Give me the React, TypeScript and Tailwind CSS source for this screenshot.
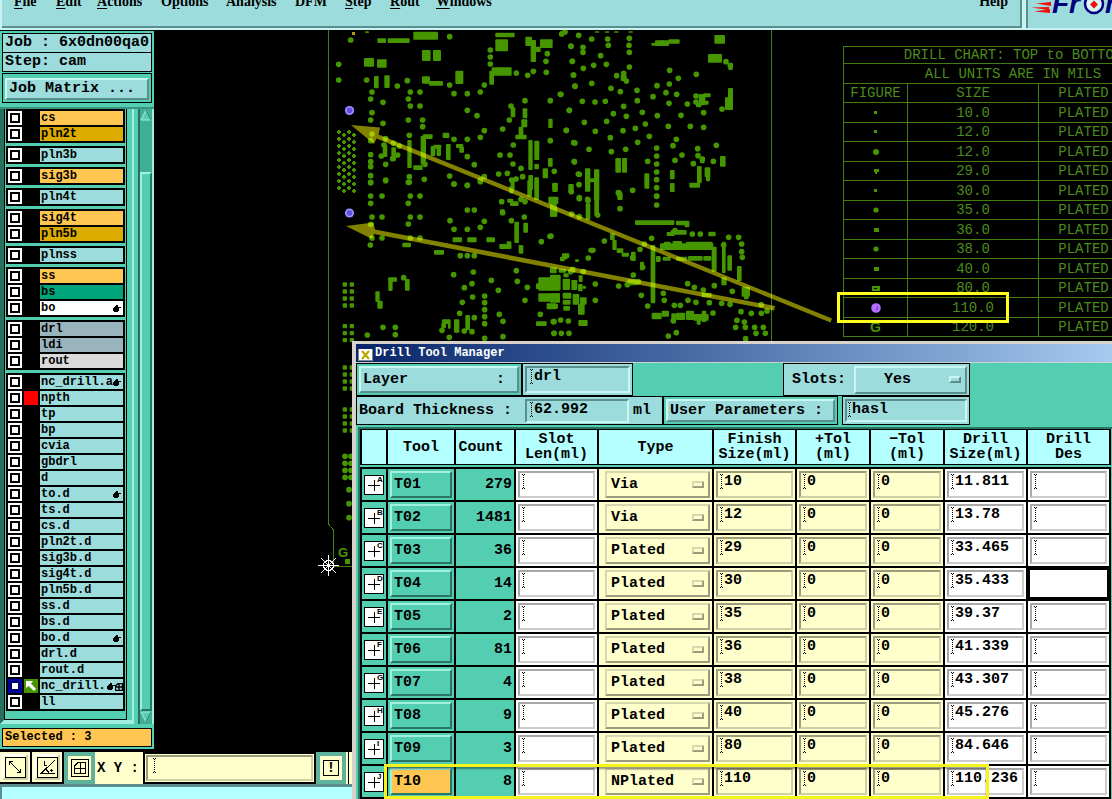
import { useState } from "react";

interface Layer {
    name: string;
    color?: string;
    mark?: "hand" | "grid";
    swatch?: "red" | "arrow";
    active?: boolean;
}

interface Tool {
    id: string;
    letter: string;
    count: number;
    type: string;
    finish: string;
    drill: string;
}

const MONO = "font-['Liberation_Mono',monospace] font-bold";
const RAISED = "border-2 border-t-[#c9f7f4] border-l-[#c9f7f4] border-b-[#5b8f8f] border-r-[#5b8f8f]";
const SUNKEN = "border-2 border-t-[#5b8f8f] border-l-[#5b8f8f] border-b-[#c9f7f4] border-r-[#c9f7f4]";
const TEAL_RAISED = "border-2 border-t-[#9ff0dc] border-l-[#9ff0dc] border-b-[#2a7563] border-r-[#2a7563]";

const ORANGE = "bg-[#ffc651]";
const GOLD = "bg-[#dbab00]";
const STEEL = "bg-[#9ab4be]";

const layerGroups: Layer[][] = [
    [{ name: "cs", color: ORANGE }, { name: "pln2t", color: GOLD }],
    [{ name: "pln3b" }],
    [{ name: "sig3b", color: ORANGE }],
    [{ name: "pln4t" }],
    [{ name: "sig4t", color: ORANGE }, { name: "pln5b", color: GOLD }],
    [{ name: "plnss" }],
    [{ name: "ss", color: ORANGE }, { name: "bs", color: "bg-[#00a57c]" }, { name: "bo", color: "bg-white", mark: "hand" }],
    [{ name: "drl", color: STEEL }, { name: "ldi", color: STEEL }, { name: "rout", color: "bg-[#dadada]" }],
    [
        { name: "nc_drill.a", mark: "hand" },
        { name: "npth", swatch: "red" },
        { name: "tp" },
        { name: "bp" },
        { name: "cvia" },
        { name: "gbdrl" },
        { name: "d" },
        { name: "to.d", mark: "hand" },
        { name: "ts.d" },
        { name: "cs.d" },
        { name: "pln2t.d" },
        { name: "sig3b.d" },
        { name: "sig4t.d" },
        { name: "pln5b.d" },
        { name: "ss.d" },
        { name: "bs.d" },
        { name: "bo.d", mark: "hand" },
        { name: "drl.d" },
        { name: "rout.d" },
        { name: "nc_drill.", mark: "grid", swatch: "arrow", active: true },
        { name: "ll" },
    ],
];

const tools: Tool[] = [
    { id: "T01", letter: "A", count: 279, type: "Via", finish: "10", drill: "11.811" },
    { id: "T02", letter: "B", count: 1481, type: "Via", finish: "12", drill: "13.78" },
    { id: "T03", letter: "C", count: 36, type: "Plated", finish: "29", drill: "33.465" },
    { id: "T04", letter: "D", count: 14, type: "Plated", finish: "30", drill: "35.433" },
    { id: "T05", letter: "E", count: 2, type: "Plated", finish: "35", drill: "39.37" },
    { id: "T06", letter: "F", count: 81, type: "Plated", finish: "36", drill: "41.339" },
    { id: "T07", letter: "G", count: 4, type: "Plated", finish: "38", drill: "43.307" },
    { id: "T08", letter: "H", count: 9, type: "Plated", finish: "40", drill: "45.276" },
    { id: "T09", letter: "I", count: 3, type: "Plated", finish: "80", drill: "84.646" },
    { id: "T10", letter: "J", count: 8, type: "NPlated", finish: "110", drill: "110.236" },
];

const chartSizes = ["10.0", "12.0", "12.0", "29.0", "30.0", "35.0", "36.0", "38.0", "40.0", "80.0", "110.0", "120.0"];

const menus = [
    { pre: "", key: "F", rest: "ile", width: "w-[42px]" },
    { pre: "", key: "E", rest: "dit", width: "w-[41px]" },
    { pre: "", key: "A", rest: "ctions", width: "w-16" },
    { pre: "O", key: "p", rest: "tions", width: "w-[65px]" },
    { pre: "Analysis", key: "", rest: "", width: "w-[69px]" },
    { pre: "DFM", key: "", rest: "", width: "w-[50px]" },
    { pre: "", key: "S", rest: "tep", width: "w-[45px]" },
    { pre: "", key: "R", rest: "out", width: "w-[46px]" },
    { pre: "", key: "W", rest: "indows", width: "w-16" },
];

// Drill hits per board quadrant, in thirds of a pixel: "x,y" for round holes and "x,y,w,h" for merged slots
const quadrants = [
    {
        x: 320,
        y: 30,
        holes: "92,30 56,103 56,150 140,150 232,168 262,152 156,186 152,207 189,217 271,186 300,186 265,207 271,228 300,228 265,270 308,270 308,290 156,248 152,270 189,280 389,20 389,165 402,191 442,191 481,186 493,165 442,241 471,257 442,380 402,328 442,328 481,322 493,302 402,462 442,466 389,438 463,404 511,60 511,81 511,102 589,129 623,136 640,124 679,127 682,71 678,94 757,94 753,49 761,135 765,168 721,193 691,212 748,241 739,301 763,395 765,339 703,424 691,332 540,375 562,430 536,432 579,402 603,415 548,297 568,270 615,212 152,374 152,395 152,410 152,437 152,458 197,403 197,450 268,316 268,457 156,312 152,332 197,326 220,340 238,348 313,448 315,403 481,450 493,440 588,447 608,440 725,12 735,6 268,440 184,378 218,386 192,345 233,375 573,228 580,345 570,375 575,450 775,432",
        slots: "280,5,74,24 172,25,26,14 203,25,66,14 306,60,26,33 339,60,24,33 132,84,30,26 171,88,29,25 162,138,14,37 193,136,16,38 306,139,24,22 327,153,42,14 406,122,24,40 508,122,14,42 515,112,60,25 526,8,58,14 526,28,38,36 616,20,20,28 632,30,16,66 660,28,38,26 640,50,22,16 685,266,13,28 625,330,13,90 643,332,15,58 608,235,14,30 604,268,18,24 572,232,14,30 596,290,14,30 586,314,34,14 188,345,14,36 214,352,14,40 262,330,13,84 302,318,16,86 332,348,14,30 340,344,24,12 350,350,13,28 378,342,14,48 408,342,22,12 418,350,14,18 625,435,14,45 643,402,14,16 643,442,14,38 668,415,16,30 684,384,14,26 280,406,28,14 308,313,30,14 368,308,20,16 697,460,16,20 135,4,12,5",
    },
    {
        x: 560,
        y: 30,
        holes: "56,16 33,48 69,52 69,67 95,27 143,27 145,46 208,25 207,46 208,67 208,111 122,77 101,106 139,103 37,94 70,115 40,135 45,169 95,160 153,175 181,185 191,130 199,153 170,137 231,181 232,212 67,214 105,216 136,214 191,229 160,251 199,259 247,247 28,241 73,277 140,274 19,301 106,304 189,302 226,295 256,282 151,323 268,319 41,338 87,358 154,365 197,358 233,337 43,395 263,394 291,167 279,200 318,188 350,193 328,162 329,121 355,145 327,220 382,222 292,257 363,256 325,289 349,328 339,347 345,391 366,375 409,133 431,248 391,289 431,292 413,356 469,346 400,401 460,394 486,237 290,354 290,378 290,402 290,426 290,449 290,473 290,498 218,481 58,433 57,464 58,503 83,508 3,193 498,95 511,107 414,377 427,387 305,39 408,198 408,216 427,205 175,488",
        slots: "285,31,42,17 325,28,34,13 274,39,14,8 463,15,32,26 444,72,42,26 505,98,13,22 504,174,15,66 495,202,12,38 416,192,20,34 430,190,22,12 430,212,16,12 408,220,16,12 0,4,22,8 182,135,18,18 166,384,17,44 186,384,15,44 253,430,15,46 330,420,14,28 330,459,14,27 411,408,14,52 388,458,32,15 434,412,17,30 438,436,12,18 420,380,14,20 480,378,17,32 25,462,16,26 75,415,16,70 90,445,24,12 102,418,16,92 172,488,16,22 104,4,14,4 134,4,14,4 162,4,14,4 205,4,14,4",
    },
    {
        x: 320,
        y: 180,
        holes: "152,48 152,70 186,48 271,48 300,48 265,70 156,111 186,111 152,133 271,111 300,111 265,132 156,174 186,174 271,174 300,174 151,195 390,122 402,148 442,90 463,90 442,148 481,142 493,124 421,227 442,227 463,227 402,12 442,16 481,5 545,65 548,98 574,122 613,111 589,272 592,304 622,322 615,361 664,185 690,169 401,284 460,276 456,311 433,323 514,301 535,331 458,351 427,367 494,348 494,368 494,389 494,410 494,431 419,400 463,413 538,403 549,424 549,470 494,475 456,455 433,453 388,472 189,442 226,442 226,464 142,465 700,425 702,460 661,403 152,7 265,7 197,2 251,293 366,451 603,58 615,65",
        slots: "398,172,28,15 442,172,28,15 499,172,26,15 247,188,26,14 342,210,30,14 583,125,14,64 610,128,14,30 538,192,36,15 560,184,14,22 596,195,14,26 205,295,13,38 205,292,26,13 255,297,14,35 166,334,13,32 172,362,16,24 366,418,26,14 364,430,14,14 384,430,8,16 402,418,16,40 436,405,14,45 648,424,32,14 562,56,18,12 570,64,26,14 540,88,14,16 572,0,12,30 568,18,12,22 622,0,14,50 643,0,14,60 697,8,16,28 685,50,30,22 690,70,20,40 655,292,65,40 648,310,14,18 655,340,65,25 680,370,30,18 68,307,13,13 89,307,13,13 68,328,13,13 89,328,13,13 68,349,13,13 89,349,13,13 68,370,13,13 89,370,13,13 68,432,13,13 89,432,13,13 68,453,13,13 89,453,13,13 68,474,13,13 89,474,13,13",
    },
    {
        x: 550,
        y: 190,
        holes: "320,19 320,45 208,10 210,56 88,26 88,80 114,32 163,153 270,178 126,181 115,204 45,200 136,282 136,331 12,395 32,390 55,393 12,430 34,430 57,430 206,288 250,255 274,316 293,348 413,281 433,292 493,287 547,304 460,300 438,337 414,331 478,338 373,346 391,346 489,369 355,438 379,428 340,310 343,331 427,132 451,132 536,142 566,142 575,162 575,185 577,202 521,165 604,370 634,370 651,363 634,344 561,391 583,396 557,412 586,412 614,412 640,412 618,430 646,430 587,446 515,340 540,343 573,365 64,5 143,75 375,122 305,145 283,162 65,72 248,203 278,232 3,138 265,275 232,284 320,378 370,392 62,245 100,245",
        slots: "255,91,118,14 378,92,40,14 404,100,14,12 350,126,24,12 362,120,48,14 475,125,22,14 330,160,160,20 342,155,20,10 368,153,28,10 408,155,80,10 485,170,15,75 318,198,14,18 338,200,24,12 378,200,34,12 414,198,44,14 460,198,24,14 302,165,14,175 516,155,11,95 532,196,14,46 561,228,14,45 575,290,25,30 582,310,14,18 514,262,16,24 180,130,14,20 187,150,13,30 200,175,20,14 215,188,22,12 243,185,14,28 270,215,12,26 232,268,30,18 305,368,30,20 335,362,22,18 364,370,14,30 378,368,28,22 408,362,24,28 430,372,46,20 440,386,12,18 455,362,14,34 455,308,30,14 0,232,20,18 26,236,22,12 60,230,16,18 92,238,16,10 0,254,32,46 40,250,16,12 38,266,22,34 64,270,18,30 86,256,12,20 84,282,14,22 98,288,10,8 0,310,30,28 38,308,26,18 68,312,20,32 38,330,24,14 90,322,20,22 84,342,20,32 0,342,24,14 40,348,20,14 85,390,28,18 107,40,14,50 133,0,14,78 200,0,12,20 0,22,18,22 0,50,22,30 36,190,22,14 30,200,14,14 75,208,12,8 115,175,22,12",
    },
    {
        x: 310,
        y: 340,
        holes: "105,349 123,349 105,370 123,370 105,391 123,391 105,412 123,412 117,449 117,491 117,533",
        slots: "98,76,13,13 119,76,13,13 98,97,13,13 119,97,13,13 98,118,13,13 119,118,13,13 98,139,13,13 119,139,13,13 98,202,13,13 119,202,13,13 98,223,13,13 119,223,13,13 98,244,13,13 119,244,13,13 98,265,13,13 119,265,13,13",
    },
];

const parse = (list: string) => list.split(" ").map((item) => item.split(",").map(Number));

function Board() {
    const hatch: number[][] = [];
    for (let row = 0; row < 9; row++) {
        for (let col = 0; col < 4; col++) {
            hatch.push([339 + col * 5, 132 + row * 7 + (col % 2 ? 3 : 0)]);
        }
    }

    return (
        <svg className="absolute top-0 left-[308px]" width="540" height="560" viewBox="308 30 540 560">
            <g fill="none" stroke="#447d12" shapeRendering="crispEdges">
                <path d="M328.5 30V524L333.5 530V566.5H360" />
                <path d="M771.5 30V345" />
            </g>
            <g fill="#469600">
                {quadrants.map((q, i) => (
                    <g key={i} transform={`translate(${q.x} ${q.y}) scale(0.3333)`}>
                        {parse(q.holes).map(([x, y], n) => (
                            <circle key={n} cx={x} cy={y} r="8.5" />
                        ))}
                        {parse(q.slots).map(([x, y, w, h], n) => (
                            <rect key={n} x={x} y={y} width={w} height={h} rx="3" />
                        ))}
                    </g>
                ))}
                <rect x="345" y="559" width="5" height="5" />
                <text x="338" y="557" fontSize="13" fontWeight="bold" fontFamily="Liberation Sans, sans-serif">G</text>
            </g>
            <path
                d={hatch.map(([x, y]) => `M${x - 2} ${y}h4M${x} ${y - 2}v4`).join("")}
                stroke="#469600"
                strokeWidth="2"
            />
            <rect x="352" y="32" width="3" height="3" fill="#a89a20" />
            {[110.5, 213].map((cy) => (
                <g key={cy}>
                    <circle cx="349.5" cy={cy} r="4.6" fill="#9c8cff" />
                    <circle cx="349.5" cy={cy} r="2.8" fill="#4a54e8" />
                    <path d={`M347.5 ${cy}h2m1 -1v2`} stroke="#c03bb4" />
                </g>
            ))}
            {/* Callout arrows from the chart row to the two tooling holes */}
            <g fill="#ffff00" fillOpacity="0.51">
                <path d="M351 125L380 127.500L378.500 134.500L832 318.500L830.500 322.500L376.500 138.500L374 144Z" />
                <path d="M346 226L373.500 222.500L375 229.500L775 306L774 310.500L374 234L372 239Z" />
            </g>
            <g stroke="#fff" shapeRendering="crispEdges">
                <path d="M318 565.500H339M328.500 555V576M321 558L336 573M336 558L321 573" />
                <circle cx="328.500" cy="565.500" r="5" fill="none" />
            </g>
        </svg>
    );
}

function Figure({ index }: { index: number }) {
    if (index === 11) {
        return <span className="font-['Liberation_Sans',sans-serif] font-bold text-[#469600]">G</span>;
    }
    return (
        <svg className="mx-auto" width="12" height="12" viewBox="0 0 12 12" fill="#469600">
            {index === 10 && (
                <>
                    <circle cx="6" cy="6" r="4.800" fill="#b56cff" />
                    <path d="M7 5h1M6 7h2" stroke="#4b2a86" />
                </>
            )}
            {index === 9 && <path d="M2 4h8v5H2zM4 6v1h3V6z" fillRule="evenodd" />}
            {index === 2 && <circle cx="6" cy="6" r="3" />}
            {index === 3 && <path d="M4 4h5v3H7v2H5V7H4z" />}
            {(index === 5 || index === 7) && <circle cx="6" cy="6" r="2.600" />}
            {(index === 6 || index === 8) && <rect x="4" y="4" width="5" height="4" />}
            {(index < 2 || index === 4) && <rect x="4" y="4" width="3" height="3" />}
        </svg>
    );
}

function DrillChart() {
    const cell = "border border-[#447d12] p-0";

    return (
        <div className="absolute top-4 left-[843px]">
            <table className="table-fixed border-collapse text-center font-['Liberation_Mono',monospace] text-sm leading-[14px] text-[#4c8c1c] w-[340px]">
                <colgroup>
                    <col className="w-16" />
                    <col className="w-[131px]" />
                    <col className="w-[90px]" />
                    <col />
                </colgroup>
                <thead>
                    <tr className="h-[17px]">
                        <th colSpan={4} className={`${cell} font-normal`}>DRILL CHART: TOP to BOTTOM</th>
                    </tr>
                    <tr className="h-5">
                        <th colSpan={4} className={`${cell} font-normal`}>ALL UNITS ARE IN MILS</th>
                    </tr>
                    <tr className="h-[19px]">
                        <th className={`${cell} font-normal`}>FIGURE</th>
                        <th className={`${cell} font-normal`}>SIZE</th>
                        <th className={`${cell} font-normal`}>PLATED</th>
                        <th className={cell} />
                    </tr>
                </thead>
                <tbody>
                    {chartSizes.map((size, i) => (
                        <tr key={i} className="odd:h-5 even:h-[19px]">
                            <td className={cell}><Figure index={i} /></td>
                            <td className={cell}>{size}</td>
                            <td className={cell}>PLATED</td>
                            <td className={cell} />
                        </tr>
                    ))}
                </tbody>
            </table>
            <div className="absolute top-[246px] -left-1.5 h-[31px] w-[172px] border-3 border-[#ffff1e]" />
        </div>
    );
}

function Header() {
    return (
        <header className="flex h-[30px] shrink-0 overflow-hidden bg-[#c9f3f3]">
            <nav className="mb-0.5 ml-0.5 flex flex-1 items-start border-r-2 border-b-2 border-[#5b8f8f] bg-[#9cdcdc] pl-3 font-['Liberation_Serif',serif] text-sm font-bold leading-4">
                {menus.map((m) => (
                    <button key={m.pre + m.key + m.rest} className={`-mt-1.5 shrink-0 text-left ${m.width}`}>
                        {m.pre}
                        {m.key && <span className="underline underline-offset-2">{m.key}</span>}
                        {m.rest}
                    </button>
                ))}
                <button className="-mt-1.5 mr-3 ml-auto">Help</button>
            </nav>
            <div className="ml-1 h-[28px] w-[86px] border-l-2 border-[#5b8f8f] bg-[#9cdcdc]">
                <svg width="84" height="28" viewBox="1028 0 84 28">
                    <path d="M1036 3.500L1051 2V6ZM1031 7.500L1049 7V10ZM1034 11.500L1050 9V13Z" fill="#f01010" />
                    <text x="1052" y="13" fontSize="28" fontWeight="bold" fontStyle="italic" fontFamily="Liberation Sans, sans-serif" fill="#00007c">Fr</text>
                    <text x="1105" y="13" fontSize="28" fontWeight="bold" fontStyle="italic" fontFamily="Liberation Sans, sans-serif" fill="#00007c">n</text>
                    <circle cx="1094" cy="4" r="9" fill="#d8f4f4" stroke="#00007c" strokeWidth="2.500" />
                    <path d="M1094 0.500L1098 4.500L1094 8.500L1090 4.500Z" fill="#f01010" />
                </svg>
            </div>
        </header>
    );
}

function HandIcon() {
    return (
        <svg width="8" height="8" viewBox="0 0 8 8" shapeRendering="crispEdges">
            <path d="M3 0h2v2h3v1H6v3H5v1H1V6H0V3h1V2h1V1h1z" />
        </svg>
    );
}

function LayerRow({ layer, checked, onToggle }: { layer: Layer; checked: boolean; onToggle: () => void }) {
    return (
        <label className="flex h-3.5 items-center gap-0.5">
            <input
                type="checkbox"
                checked={checked}
                onChange={onToggle}
                className={layer.active
                    ? "size-3.5 shrink-0 appearance-none border-2 border-[#0000a8] bg-white shadow-[inset_0_0_0_2px_#000060]"
                    : "size-3.5 shrink-0 appearance-none border-2 border-white bg-white shadow-[inset_0_0_0_2px_black]"}
            />
            <span className={`size-3.5 shrink-0 ${layer.swatch === "red" ? "bg-[#ff0000]" : layer.swatch === "arrow" ? "bg-[#469600]" : ""}`}>
                {layer.swatch === "arrow" && (
                    <svg width="14" height="14" viewBox="0 0 14 14" fill="#fff">
                        <path d="M2 2H9L7 4.500L12 10L10 12L4.500 7L2 9Z" />
                    </svg>
                )}
            </span>
            <span className={`flex h-3.5 min-w-0 flex-1 items-center overflow-hidden pl-px leading-[14px] ${layer.color ?? "bg-[#9cdcdc]"}`}>
                <span className="min-w-0 flex-1 whitespace-nowrap">{layer.name}</span>
                {layer.mark === "hand" && <span className="mt-0.5 mr-0.5"><HandIcon /></span>}
                {layer.mark === "grid" && (
                    <span className="mt-0.5 flex">
                        <HandIcon />
                        <svg width="8" height="8" viewBox="0 0 8 8">
                            <path d="M0.500 7.500V3L3 0.500H7.500V7.500ZM0.500 4H7.500M4 1V7.500" fill="none" stroke="#000" strokeWidth="1.400" />
                        </svg>
                    </span>
                )}
            </span>
        </label>
    );
}

function Sidebar() {
    const [checked, setChecked] = useState<string[]>([]);

    const toggle = (name: string) => {
        setChecked(checked.includes(name) ? checked.filter((n) => n !== name) : [...checked, name]);
    };

    return (
        <aside className={`relative flex w-[154px] shrink-0 flex-col self-start bg-[#54ceb0] pt-0.5 pb-0.5 text-black ${MONO}`}>
            <div className="mx-0.5 overflow-hidden border border-black bg-[#9cdcdc] pl-0.5 text-[15px] leading-[18px] whitespace-nowrap">
                Job : 6x0dn00qa0
            </div>
            <div className="mx-0.5 border border-t-0 border-black bg-[#9cdcdc] pl-0.5 text-[15px] leading-[18px]">
                Step: cam
            </div>
            <div className="mx-0.5 mt-px border border-black p-0.5">
                <button className={`h-[22px] w-full bg-[#9cdcdc] pl-0.5 text-left text-[15px] leading-[18px] ${RAISED}`}>
                    Job Matrix ...
                </button>
            </div>
            <div className="mt-1 flex border-t-2 border-[#3a9480]">
                <div className="flex flex-1 border-b-4 border-l-4 border-b-[#9ff0dc] border-l-[#2a6e5e]">
                    <div className="flex-1 border-r border-b border-l border-black px-px pb-2">
                        <div className="flex flex-col gap-[3px] text-xs">
                            {layerGroups.map((group, i) => (
                                <div key={i} className="flex flex-col gap-0.5 bg-black p-0.5">
                                    {group.map((layer) => (
                                        <LayerRow
                                            key={layer.name}
                                            layer={layer}
                                            checked={checked.includes(layer.name)}
                                            onToggle={() => toggle(layer.name)}
                                        />
                                    ))}
                                </div>
                            ))}
                        </div>
                    </div>
                    <div className="w-[7px] border-r-2 border-[#9ff0dc]" />
                </div>
                <div className="mr-px ml-1 flex w-4 flex-col border-r-2 border-l-2 border-r-[#9ff0dc] border-l-[#2a6e5e] bg-[#3fae94]">
                    <svg width="12" height="13" viewBox="0 0 12 13">
                        <path d="M6 1L11 11H1Z" fill="#54ceb0" stroke="#9ff0dc" />
                        <path d="M6 1L11 11" stroke="#2a6e5e" />
                    </svg>
                    <div className="h-[50px]" />
                    <div className={`flex-1 bg-[#54ceb0] ${TEAL_RAISED}`} />
                    <svg width="12" height="13" viewBox="0 0 12 13">
                        <path d="M1 1H11L6 11Z" fill="#54ceb0" stroke="#9ff0dc" />
                        <path d="M11 1L6 11" stroke="#2a6e5e" />
                    </svg>
                </div>
            </div>
            <div className="mx-0.5 mt-1 border border-black bg-[#ffc651] pl-0.5 text-xs leading-[17px]">
                Selected : 3
            </div>
        </aside>
    );
}

function Beam() {
    return (
        <svg className="mt-px shrink-0" width="5" height="15" viewBox="0 0 5 15" shapeRendering="crispEdges">
            <path d="M2.500 1V15" stroke="#000" strokeDasharray="1 1" />
            <path d="M1 0h1v1H1zM3 0h1v1H3zM1 14h1v1H1zM3 14h1v1H3z" />
        </svg>
    );
}

function Toolbar() {
    const button = "flex h-full w-8 items-center justify-center border-r-2 border-b-2 border-black bg-[#ffffcc] p-0.5";
    const face = "flex h-full w-full items-center justify-center border-2 border-t-white border-l-white border-r-[#d0d0a8] border-b-[#d0d0a8]";
    const framed = "flex h-full items-center justify-center border-4 border-[#5fb39c] bg-[#ffffcc]";

    return (
        <footer className="shrink-0">
            <div className="flex h-[33px] border-t border-black bg-[#ffffcc]">
                <button aria-label="Zoom" className={button}>
                    <span className={face}>
                        <svg width="21" height="21" viewBox="0 0 21 21" fill="none" stroke="#000" shapeRendering="crispEdges">
                            <rect x="0.500" y="0.500" width="20" height="20" />
                            <path d="M4.500 8V4.500H8M4.500 4.500L15.500 15.500M12 15.500H15.500V12" />
                        </svg>
                    </span>
                </button>
                <button aria-label="Angle" className={button}>
                    <span className={face}>
                        <svg width="21" height="21" viewBox="0 0 21 21" fill="none" stroke="#000" shapeRendering="crispEdges">
                            <rect x="0.500" y="0.500" width="20" height="20" />
                            <path d="M18 3L4 16.500H18M7.500 4V8H10M9 12L12 16M12.500 13H16M14 12V15" />
                        </svg>
                    </span>
                </button>
                <button aria-label="Grid" className={`${framed} w-[31px]`}>
                    <svg width="18" height="18" viewBox="0 0 18 18" fill="none" stroke="#000" shapeRendering="crispEdges">
                        <rect x="0.500" y="0.500" width="17" height="17" />
                        <path d="M3.500 14.500V7L7 3.500H14.500V14.500ZM3.500 9.500H14.500M9.500 3.500V14.500" />
                    </svg>
                </button>
                <label htmlFor="xy" className={`pt-1.5 pr-1 pl-0.5 text-sm leading-5 ${MONO}`}>X Y :</label>
                <div className="flex w-[173px] border-2 border-black p-px">
                    <div className="flex w-full border-2 border-t-[#9c9c7c] border-l-[#9c9c7c] border-r-[#d0d0a8] border-b-[#d0d0a8] pl-1">
                        <Beam />
                        <input id="xy" aria-label="X Y" className="min-w-0 flex-1 outline-none" />
                    </div>
                </div>
                <button aria-label="Apply" className={`${framed} w-[30px]`}>
                    <span className={`flex size-4 items-center justify-center border border-black text-sm ${MONO}`}>!</span>
                </button>
                <div className="ml-0.5 flex-1 border-l border-black" />
            </div>
            <div className="h-[15px] border-t-3 border-l-2 border-[#5b8f8f] bg-[#b4ffff]" />
        </footer>
    );
}

function Field({ label, value, plain, focused }: { label: string; value: string; plain?: boolean; focused?: boolean }) {
    let frame = "border-t-[#9c9c7c] border-l-[#9c9c7c] border-r-[#d0d0a8] border-b-[#d0d0a8] bg-[#ffffcc]";
    if (plain) {
        frame = "border-t-[#a8a8a8] border-l-[#a8a8a8] border-r-[#cccccc] border-b-[#cccccc] bg-white";
    }
    return (
        <div className={focused ? "flex h-[31px] items-start border-2 border-black bg-white" : `m-0.5 flex h-[27px] items-start border-2 ${frame}`}>
            {!focused && <span className="pl-px"><Beam /></span>}
            <input aria-label={label} defaultValue={value} className="h-[18px] w-0 min-w-0 flex-1 outline-none" />
        </div>
    );
}

function ToolRow({ tool }: { tool: Tool }) {
    const td = "border-r-2 border-b-2 border-black p-0";
    const white = `${td} bg-white`;
    const yellow = `${td} bg-[#ffffcc]`;

    return (
        <tr className="h-[33px]">
            <td className={`${td} border-l-2`}>
                <svg className="mx-auto" width="20" height="20" viewBox="0 0 20 20" shapeRendering="crispEdges">
                    <rect x="0.500" y="0.500" width="19" height="19" fill="#fff" stroke="#000" />
                    <path d="M4 10.500H16M10.500 5V16" stroke="#000" />
                    <text x="13" y="7" fontSize="8" fontFamily="Liberation Sans, sans-serif">{tool.letter}</text>
                </svg>
            </td>
            <td className={td}>
                <button className={`mx-0.5 block h-[27px] w-[62px] pl-0.5 text-left ${TEAL_RAISED} ${tool.id === "T10" ? "bg-[#ffc651]" : "bg-[#54ceb0]"}`}>
                    {tool.id}
                </button>
            </td>
            <td className={`${td} pr-0.5 text-right`}>{tool.count}</td>
            <td className={white}><Field label={`${tool.id} slot length`} value="" plain /></td>
            <td className={yellow}>
                <div className="relative mr-0.5 ml-1.5 h-[27px]">
                    <select
                        aria-label={`${tool.id} type`}
                        defaultValue={tool.type}
                        className="h-full w-full appearance-none border-2 border-t-[#d8d8b0] border-l-[#d8d8b0] border-r-[#9c9c7c] border-b-[#9c9c7c] pl-1"
                    >
                        <option>Via</option>
                        <option>Plated</option>
                        <option>NPlated</option>
                    </select>
                    <span className="pointer-events-none absolute top-2.5 right-1.5 h-[7px] w-3 border-2 border-t-[#d8d8b0] border-l-[#d8d8b0] border-r-[#9c9c7c] border-b-[#9c9c7c]" />
                </div>
            </td>
            <td className={yellow}><Field label={`${tool.id} finish size`} value={tool.finish} /></td>
            <td className={yellow}><Field label={`${tool.id} plus tolerance`} value="0" /></td>
            <td className={yellow}><Field label={`${tool.id} minus tolerance`} value="0" /></td>
            <td className={white}><Field label={`${tool.id} drill size`} value={tool.drill} plain /></td>
            <td className={white}><Field label={`${tool.id} drill designation`} value="" plain focused={tool.id === "T04"} /></td>
        </tr>
    );
}

function ToolManager() {
    const th = "border-t border-r-2 border-b border-black bg-[#b4ffff] p-0 font-bold leading-[15px]";

    return (
        <section className={`absolute top-[341px] right-0 bottom-0 left-[352px] overflow-hidden border-t-3 border-l-4 border-[#d8d4cc] bg-[#54ceb0] text-[15px] leading-5 text-black ${MONO}`}>
            <h1 className="flex h-[19px] items-center gap-0.5 border-b border-[#c8d4d0] bg-linear-to-r from-[#0a246a] to-[#a6caf0] pl-0.5 text-xs text-white">
                <svg width="15" height="15" viewBox="0 0 15 15">
                    <rect x="0.500" y="0.500" width="14" height="14" fill="#fff" stroke="#888" />
                    <rect width="15" height="3" fill="#0a246a" />
                    <path d="M4 5L11 13M11 5L4 13" stroke="#b8a800" strokeWidth="2" />
                </svg>
                Drill Tool Manager
            </h1>

            <div className="flex h-[33px]">
                <div className="flex w-[166px] border border-black p-0.5">
                    <button className={`flex flex-1 items-center justify-between bg-[#9cdcdc] pr-3 pl-0.5 ${RAISED}`}>
                        <span>Layer</span>
                        <span>:</span>
                    </button>
                </div>
                <div className="flex w-[111px] border border-black bg-[#9cdcdc] p-0.5">
                    <div className={`flex flex-1 items-start pl-0.5 ${SUNKEN}`}>
                        <Beam />
                        <input aria-label="Layer" defaultValue="drl" className="h-[18px] w-0 min-w-0 flex-1 outline-none" />
                    </div>
                </div>
                <div className="ml-[150px] flex w-[187px] items-center border border-black bg-[#9cdcdc] p-0.5">
                    <label htmlFor="slots" className="mr-2 pl-1.5">Slots:</label>
                    <div className="relative h-7 flex-1">
                        <select id="slots" defaultValue="Yes" className={`h-full w-full appearance-none pl-7 ${RAISED}`}>
                            <option>Yes</option>
                            <option>No</option>
                        </select>
                        <span className={`pointer-events-none absolute top-2.5 right-1.5 h-[7px] w-3 ${RAISED}`} />
                    </div>
                </div>
            </div>

            <div className="flex h-[29px]">
                <div className="flex w-[307px] items-center border border-black bg-[#9cdcdc] pl-0.5">
                    <label htmlFor="thickness" className="w-[166px] whitespace-nowrap">Board Thickness :</label>
                    <div className={`flex h-6 w-[104px] items-start pl-0.5 ${SUNKEN}`}>
                        <Beam />
                        <input id="thickness" defaultValue="62.992" className="h-[18px] w-0 min-w-0 flex-1 outline-none" />
                    </div>
                    <span className="ml-1">ml</span>
                </div>
                <div className="flex w-[175px] border border-black p-0.5">
                    <button className={`flex-1 bg-[#9cdcdc] pl-0.5 text-left leading-5 whitespace-nowrap ${RAISED}`}>
                        User Parameters :
                    </button>
                </div>
                <div className="ml-1 flex w-32 border border-black bg-[#9cdcdc] p-0.5">
                    <div className={`flex flex-1 items-start ${SUNKEN}`}>
                        <Beam />
                        <input aria-label="User parameters" defaultValue="hasl" className="h-[18px] w-0 min-w-0 flex-1 outline-none" />
                    </div>
                </div>
            </div>

            <div className="mt-0.5 ml-0.5 border-t-2 border-l-2 border-[#2a7563]">
                <table className="w-[751px] table-fixed border-separate border-spacing-0">
                    <colgroup>
                        <col className="w-7" />
                        <col className="w-[68px]" />
                        <col className="w-[60px]" />
                        <col className="w-[83px]" />
                        <col className="w-[115px]" />
                        <col className="w-[83px]" />
                        <col className="w-[74px]" />
                        <col className="w-[74px]" />
                        <col className="w-[83px]" />
                        <col className="w-[83px]" />
                    </colgroup>
                    <thead>
                        <tr className="h-9">
                            <th className={`${th} border-l-2`} />
                            <th className={th}>Tool</th>
                            <th className={`${th} pr-2`}>Count</th>
                            <th className={th}>Slot<br />Len(ml)</th>
                            <th className={th}>Type</th>
                            <th className={th}>Finish<br />Size(ml)</th>
                            <th className={th}>+Tol<br />(ml)</th>
                            <th className={th}>−Tol<br />(ml)</th>
                            <th className={th}>Drill<br />Size(ml)</th>
                            <th className={th}>Drill<br />Des</th>
                        </tr>
                        <tr className="h-1">
                            <td colSpan={10} className="border-b-2 border-black p-0" />
                        </tr>
                    </thead>
                    <tbody>
                        {tools.map((tool) => <ToolRow key={tool.id} tool={tool} />)}
                    </tbody>
                </table>
            </div>

            {/* Marks the non-plated tool */}
            <div className="pointer-events-none absolute top-[420px] left-7 h-[35px] w-[605px] border-3 border-[#f4f41e] shadow-[inset_0_2px_2px_rgba(0,0,0,0.4)]" />
        </section>
    );
}

export default function App() {
    return (
        <div className="relative flex h-screen flex-col overflow-hidden bg-black">
            <Header />
            <main className="relative flex min-h-0 flex-1 overflow-hidden pt-px">
                <Sidebar />
                <Board />
                <DrillChart />
            </main>
            <Toolbar />
            <ToolManager />
        </div>
    );
}
